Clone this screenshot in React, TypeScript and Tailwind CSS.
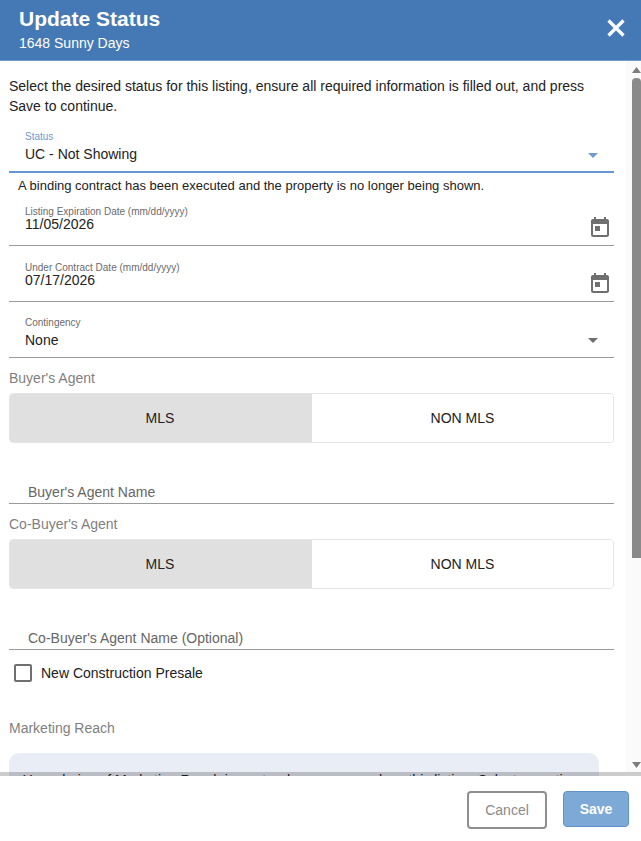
const font = "font-['Liberation_Sans',Arial,sans-serif]";

function CalendarIcon() {
  return (
    <svg width="24" height="24" viewBox="0 0 24 24" fill="#6f6f6f" className="shrink-0">
      <path d="M19 4h-1V2h-2v2H8V2H6v2H5c-1.11 0-2 .9-2 2v14a2 2 0 0 0 2 2h14c1.1 0 2-.9 2-2V6c0-1.1-.9-2-2-2zm0 16H5V9h14v11z" />
      <rect x="7" y="11" width="5" height="5" />
    </svg>
  );
}

function Caret({ color }: { color: string }) {
  return (
    <svg width="10" height="5" viewBox="0 0 10 5" fill={color} className="shrink-0">
      <path d="M0 0h10L5 5z" />
    </svg>
  );
}

function DateField({ label, value }: { label: string; value: string }) {
  return (
    <div className="flex h-[50px] items-end justify-between border-b border-[#9a9a9a] pl-4 pr-[2px] pb-[6px]">
      <div className="pb-[7px]">
        <div className="text-[10px] leading-[12px] text-[#6b6b6b]">{label}</div>
        <div className="-mt-[2px] text-sm leading-[16px] text-[#222]">{value}</div>
      </div>
      <CalendarIcon />
    </div>
  );
}

function AgentToggle() {
  return (
    <div className="flex h-[50px] overflow-hidden rounded-[4px] border border-[#e4e4e4] text-sm text-[#222]">
      <div className="flex w-[302px] items-center justify-center bg-[#e0e0e0] pr-[2px]">MLS</div>
      <div className="flex flex-1 items-center justify-center bg-white">NON MLS</div>
    </div>
  );
}

function SectionLabel({ children }: { children: string }) {
  return <div className="text-sm leading-[16px] text-[#7f7f7f]">{children}</div>;
}

export default function App() {
  return (
    <div className={`${font} flex h-[841px] w-[641px] flex-col overflow-hidden bg-white`}>
      <header className="flex h-[61px] shrink-0 items-start justify-between border-b border-[#6d9ccf] bg-[#4579b5] pl-[19px] pr-[15px] text-white">
        <div>
          <div className="pt-[7px] text-[21px] leading-[23px] font-bold">Update Status</div>
          <div className="pt-[5px] text-sm leading-[16px]">1648 Sunny Days</div>
        </div>
        <svg width="20" height="20" viewBox="0 0 20 20" className="mt-[18px]" stroke="white" strokeWidth="3.2">
          <path d="M2.5 2.5l15 15M17.5 2.5l-15 15" />
        </svg>
      </header>

      <div className="flex h-[715px] shrink-0 items-start">
        <main className="h-full w-[626px] overflow-hidden pl-[9px] pr-[12px]">
          <p className="pt-[15px] text-sm leading-[20px] text-[#222]">
            Select the desired status for this listing, ensure all required information is filled out, and press Save to continue.
          </p>

          <div className="mt-[11px] flex h-[46px] items-end justify-between border-b-2 border-[#6597cf] pl-4 pr-4 pb-[9px]">
            <div>
              <div className="text-[10px] leading-[12px] text-[#6f9ad0]">Status</div>
              <div className="pt-[3px] text-sm leading-[16px] text-[#222]">UC - Not Showing</div>
            </div>
            <div className="pb-[4px]">
              <Caret color="#6f9ad0" />
            </div>
          </div>
          <div className="pt-[5px] pl-[9px] text-[13px] leading-[16px] text-[#222]">
            A binding contract has been executed and the property is no longer being shown.
          </div>

          <div className="mt-[2px]">
            <DateField label="Listing Expiration Date (mm/dd/yyyy)" value="11/05/2026" />
          </div>
          <div className="mt-[6px]">
            <DateField label="Under Contract Date (mm/dd/yyyy)" value="07/17/2026" />
          </div>

          <div className="mt-[6px] flex h-[50px] items-end justify-between border-b border-[#9a9a9a] pl-4 pr-4 pb-[9px]">
            <div>
              <div className="text-[10px] leading-[12px] text-[#6b6b6b]">Contingency</div>
              <div className="pt-[3px] text-sm leading-[16px] text-[#222]">None</div>
            </div>
            <div className="pb-[5px]">
              <Caret color="#6f6f6f" />
            </div>
          </div>

          <div className="pt-[12px]">
            <SectionLabel>Buyer's Agent</SectionLabel>
          </div>
          <div className="mt-[7px]">
            <AgentToggle />
          </div>
          <div className="mt-[41px] border-b border-[#9a9a9a] pb-[3px] pl-[19px] text-sm leading-[16px] text-[#666]">
            Buyer's Agent Name
          </div>

          <div className="pt-[12px]">
            <SectionLabel>Co-Buyer's Agent</SectionLabel>
          </div>
          <div className="mt-[7px]">
            <AgentToggle />
          </div>
          <div className="mt-[41px] border-b border-[#9a9a9a] pb-[3px] pl-[19px] text-sm leading-[16px] text-[#666]">
            Co-Buyer's Agent Name (Optional)
          </div>

          <div className="mt-[14px] flex items-center gap-[9px] pl-[5px]">
            <div className="h-[18px] w-[18px] rounded-[2px] border-2 border-[#6f6f6f]" />
            <span className="text-sm leading-[16px] text-[#222]">New Construction Presale</span>
          </div>

          <div className="pt-[38px]">
            <SectionLabel>Marketing Reach</SectionLabel>
          </div>
          <div className="mt-[17px] h-[80px] w-[590px] rounded-t-[10px] bg-[#e9eef6] px-[14px] pt-[17px] text-sm leading-[20px] whitespace-nowrap text-[#222]">
            Your choice of Marketing Reach impacts where you can show this listing. Select an option
          </div>
        </main>

        <div className="flex h-[712px] w-[15px] flex-col items-end bg-[#fafafa]">
          <div className="flex h-[17px] w-[9px] items-center justify-center pt-[1px]">
            <svg width="9" height="6" viewBox="0 0 9 6" fill="#7d7d7d"><path d="M4.5 0L9 6H0z" /></svg>
          </div>
          <div className="h-[480px] w-[9px] rounded-t-[4px] bg-[#8a8a8a]" />
          <div className="flex-1" />
          <div className="flex h-[17px] w-[9px] items-center justify-center">
            <svg width="9" height="6" viewBox="0 0 9 6" fill="#7d7d7d"><path d="M0 0h9L4.5 6z" /></svg>
          </div>
        </div>
      </div>

      <footer className="relative flex flex-1 items-start justify-end gap-[16px] bg-white pt-[15px] pr-[12px]">
        <div className="absolute -top-[4px] right-0 left-0 h-[4px] bg-black/20" />
        <button className="h-[38px] w-[80px] rounded-[4px] border-2 border-[#8f8f8f] bg-white text-sm text-[#8a8a8a]">Cancel</button>
        <button className="h-[36px] w-[66px] rounded-[4px] border border-[#5f93cb] bg-[#7da9d6] text-sm font-bold text-white">Save</button>
      </footer>
    </div>
  );
}
